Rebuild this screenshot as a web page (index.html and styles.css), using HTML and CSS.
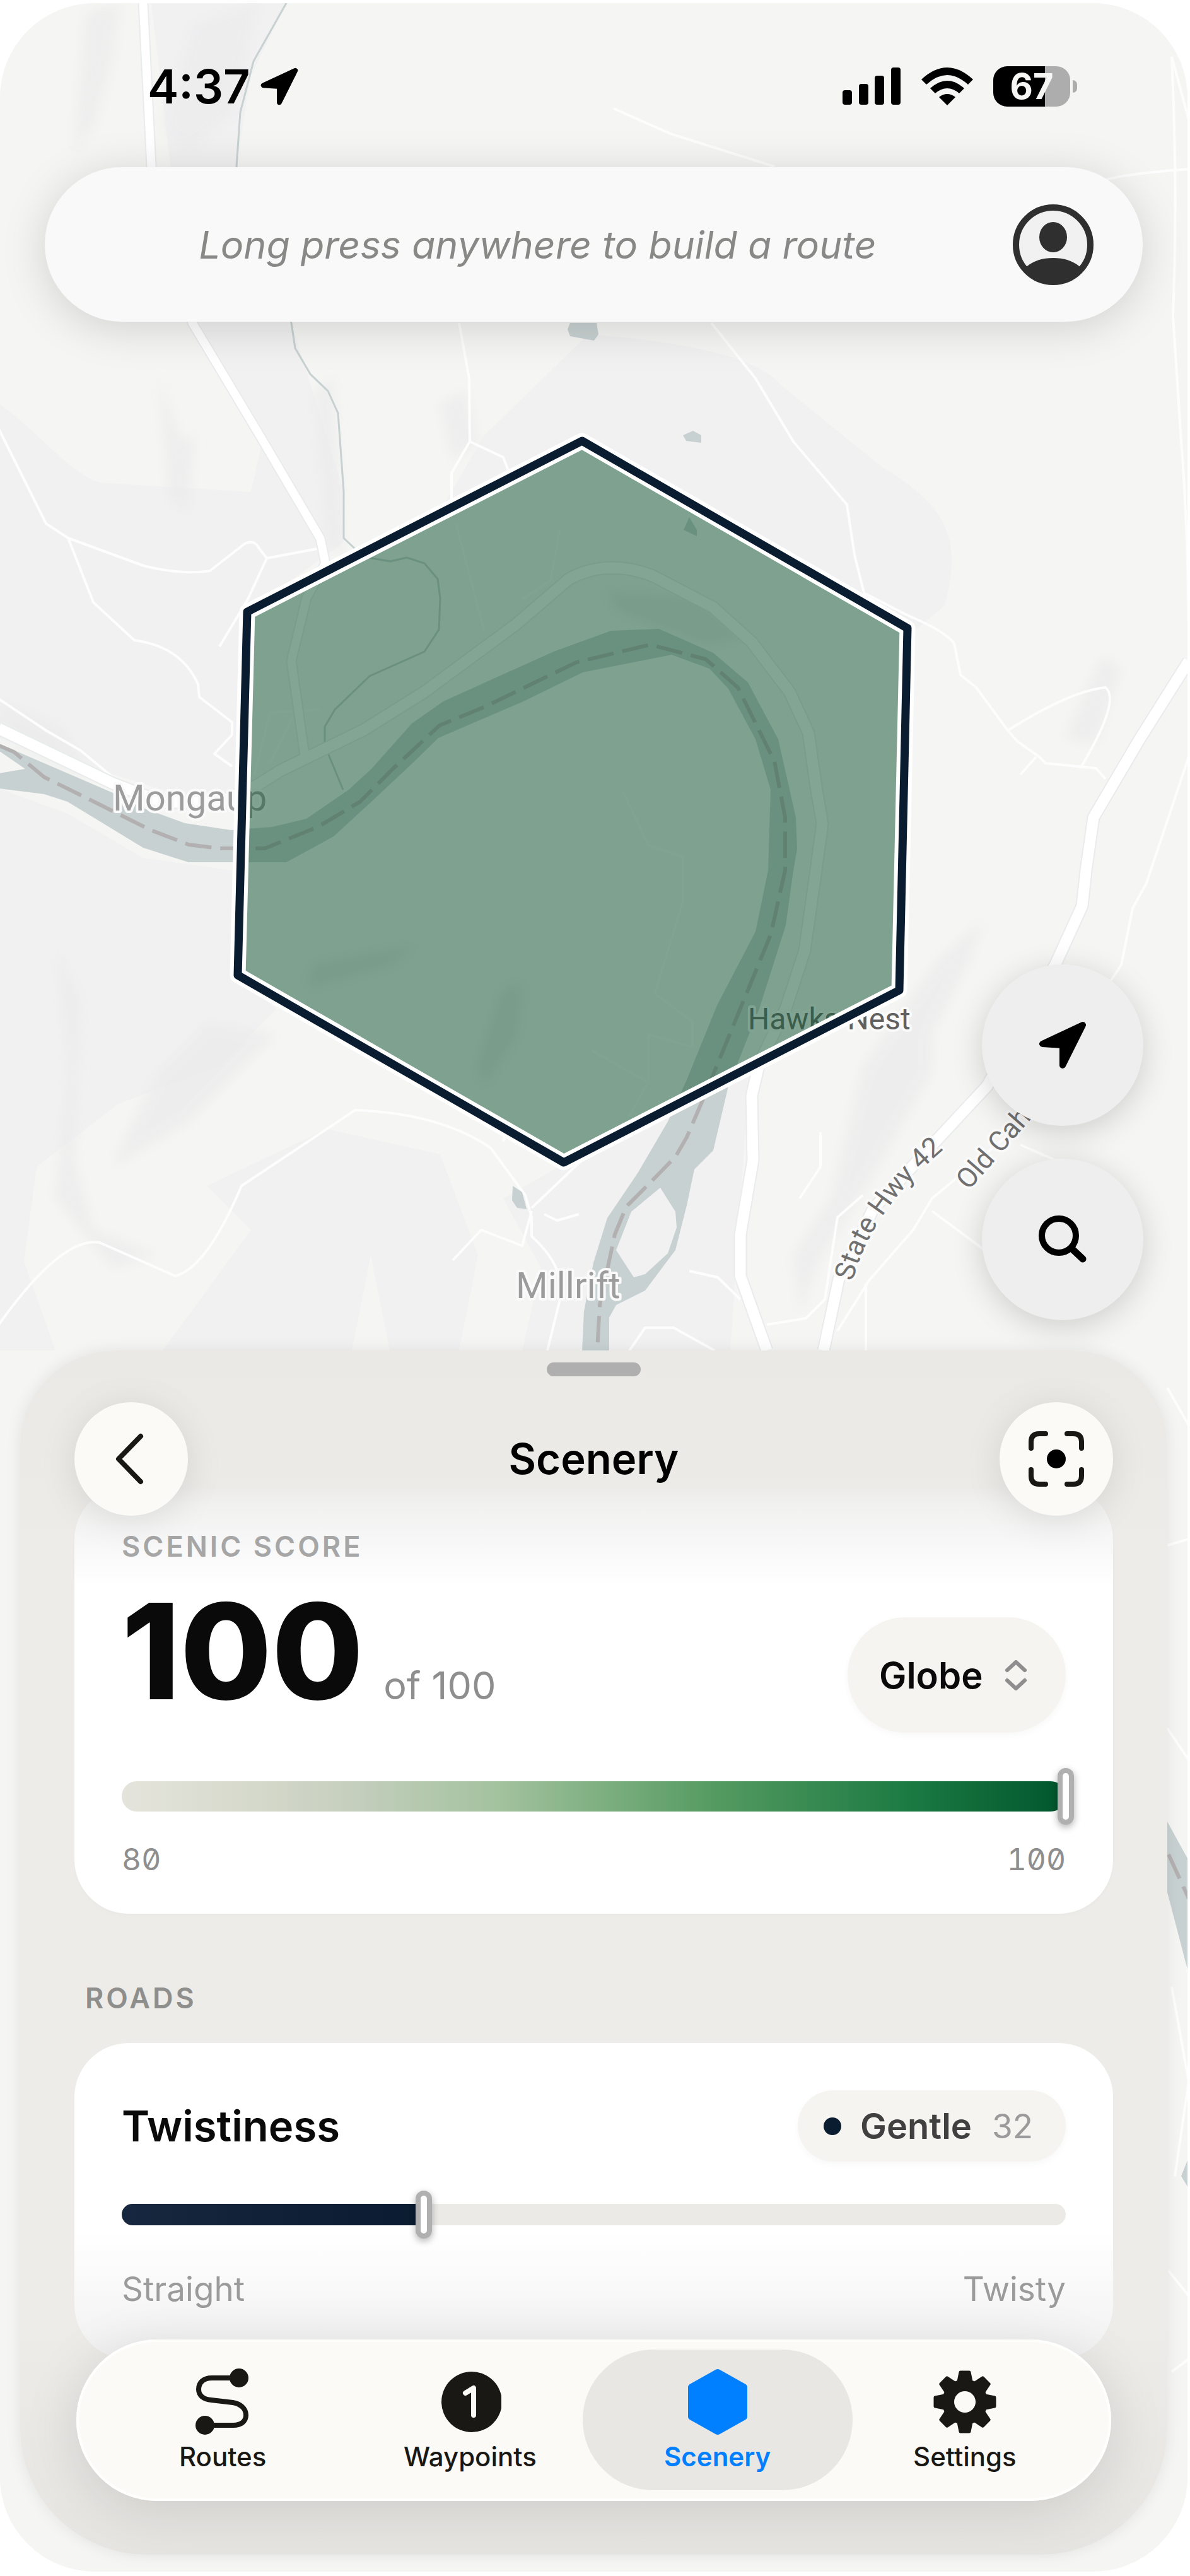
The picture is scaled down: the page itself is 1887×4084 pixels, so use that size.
FILE: index.html
```html
<!DOCTYPE html>
<html lang="en">
<head>
  <meta charset="UTF-8" />
  <meta name="viewport" content="width=device-width, initial-scale=1.0">
  <title>Scenery</title>
  <link rel="stylesheet" href="styles.css">
</head>
<body>
  <div class="screen">

    <!-- map canvas -->
    <svg class="map" viewBox="0 5 1887 4072" preserveAspectRatio="xMidYMin slice" role="img" aria-label="Map">
      <defs>
        <filter id="soft" x="-20%" y="-20%" width="140%" height="140%"><feGaussianBlur stdDeviation="9" /></filter>
      </defs>
      <rect y="5" width="1887" height="4072" fill="#f5f5f3" />

      <!-- woodland -->
      <g fill="#f1f1f2">
        <path d="M242 5H456L400 120L377 264L464 512L547 779V860L394 970L379 1290L0 1170V640C60 680 110 750 160 765L400 780L420 690L300 500Z" />
        <path d="M935 530C1060 540 1200 560 1240 610L1400 740C1500 800 1530 850 1500 960L1440 1010L920 700L700 810L770 690Z" />
        <path d="M0 1250L109 1290L229 1360L370 1380L379 1546L440 1600L350 1690L190 1750L60 1850L40 2000L90 2141H0Z" />
        <path d="M896 1845L1190 1700L1160 2141H830L860 2010L800 1900Z" />
        <path d="M330 1880L520 1790L700 1830L760 1990L730 2141H620L590 1990L560 2141H260L400 1950Z" />
      </g>
      <g fill="#ebebec" filter="url(#soft)" opacity=".7">
        <path d="M310 40L410 5L370 180L300 240L260 200Z" />
        <path d="M140 20L190 5L180 90L150 200L120 240Z" />
        <path d="M255 600L290 700L310 690L300 820L270 790Z" />
        <path d="M0 1110L100 1150L150 1240L60 1200L0 1165Z" />
        <path d="M90 1500L130 1580L120 1840L150 1950L250 1990L180 2010L90 1900L110 1690Z" />
        <path d="M330 1620L440 1640L300 1780L180 1850L250 1700Z" />
        <path d="M1370 1690L1490 1520L1560 1460L1540 1520L1480 1640L1480 1700L1400 1840L1300 2000L1270 2080L1260 1990L1320 1900Z" />
        <path d="M700 640L740 620L760 700L720 730Z" />
        <path d="M1750 1040L1780 1060L1740 1180L1690 1170Z" />
        <path d="M500 620L530 600L545 880L520 860Z" />
      </g>
      <g fill="#e9eaea" filter="url(#soft)">
        <path d="M960 940L1100 950L1180 1010L1120 1020L990 970Z" />
        <path d="M500 1530L660 1500L620 1530L490 1565Z" />
        <path d="M800 1570L830 1560L820 1640L770 1720L760 1690Z" />
      </g>

      <!-- minor roads -->
      <g fill="none" stroke="#fdfdfd" stroke-width="4" stroke-linejoin="round">
        <path d="M0 680L75 830L110 853L230 897Q290 912 335 905L390 862Q405 855 412 868L425 885L505 870M110 853L150 955L215 1015Q290 1025 316 1085L318 1105L370 1145V1165L342 1195L370 1215" />
        <path d="M425 885L395 950L350 1025M0 1108L75 1158L130 1190L200 1248M730 512L746 600L747 700L718 750V800M747 700L800 725L815 765" />
        <path d="M975 172L1065 212L1230 264M1130 512L1200 600L1260 700L1345 800L1357 880L1372 940L1440 975Q1500 1000 1515 1020L1525 1070L1550 1090L1600 1158L1615 1175L1650 1200L1660 1210L1740 1218L1755 1235" />
        <path d="M1600 1158Q1700 1095 1755 1090Q1780 1110 1715 1218M1645 1200L1620 1228M1755 285Q1790 275 1887 268M1860 90L1887 190M1860 90Q1870 300 1862 500L1875 700Q1885 820 1887 1000" />
        <path d="M725 830L770 1000M890 840L875 920L830 950M990 1255L1030 1340L1085 1358V1430L1040 1575L1100 1620V1660L1030 1640L1030 1714L1000 1770M940 1665L1028 1715" stroke-opacity=".6" />
        <path d="M1887 1200L1820 1400L1798 1440L1780 1530L1600 1800L1480 1900L1450 1950L1380 2030L1330 2110M1480 1920L1567 1985M1375 2035V2141M1620 1815L1700 1850" />
        <path d="M0 2100Q100 1960 160 1970L280 2023Q330 2010 385 1880L565 1760Q700 1765 780 1820L835 1895L845 1930V1960Q900 2010 890 2060L870 2141M800 1810L805 1790M945 1820L845 1915M845 1920L830 1975L765 1950L720 1998M865 1925L885 1935L920 1925" />
        <path d="M1000 2141L1025 2105L1070 2105L1135 2141M1095 2015L1140 2025L1176 2060M1218 2100L1280 2090L1310 2060L1330 1930L1370 1895M1303 1795V1850L1270 1900" />
        <path d="M405 1230L430 1130L510 1125M430 1210L470 1130" opacity=".6" />
        <path d="M1853 2200L1887 2260M1853 2450L1887 2440M1853 2740L1887 2790M1860 3150L1887 3300L1865 3450M1855 3600L1887 3640M1860 3760L1887 3740" />
      </g>

      <!-- creek and ponds -->
      <path d="M456 5L404 97L383 178L377 264L464 512L470 552L494 593L522 620L538 655L547 779V853L564 869L591 885L621 890L647 884L675 893L696 918L700 948L698 998L675 1033L588 1072L533 1125L517 1152V1182L546 1252" fill="none" stroke="#c8d1d1" stroke-width="3" />
      <g fill="#c8d1d1">
        <path d="M906 512H948L951 530L944 540L906 533L902 522Z" />
        <path d="M1085 690L1101 683L1114 690V702L1090 699Z" />
        <path d="M1095 820L1107 840V850L1086 840Z" />
        <path d="M815 1880L830 1890L837 1917L822 1915L814 1903Z" />
      </g>

      <!-- river -->
      <path fill="#c8d1d1" fill-rule="evenodd" d="M0 1179L181 1257L229 1281L295 1305L368 1316L434 1311L488 1298L555 1252L591 1219L655 1147L705 1112L880 1033L971 1000L1047 997L1133 1035L1188 1082L1236 1172L1264 1296L1266 1346L1260 1380L1248 1467L1206 1599L1157 1722L1133 1824L1103 1854L1091 1911L1073 1982L1025 2046L979 2069L968 2089V2141H925L928 2079L943 2002L965 1931L1013 1860L1061 1778L1091 1712L1139 1594L1200 1477L1220 1380L1224 1252L1200 1172L1157 1092L1127 1060L1067 1038L926 1066L832 1112L697 1170L657 1209L591 1271L531 1326L456 1367H301L229 1344L109 1271L72 1259L0 1250V1226L42 1219L0 1190Z
        M1049 1883L1073 1921L1075 1946L1061 1987L1025 2020L1007 2025L979 1982L1003 1921Z" />
      <path d="M1853 2888L1887 2950V3130L1853 3000ZM1875 3450L1887 3420V3470Z" fill="#c8d1d1" />
      <path d="M0 1182L24 1192L72 1232L157 1274L241 1316L301 1339L350 1345H422L506 1311L573 1271L627 1217L699 1150L772 1120L916 1050L1033 1022L1121 1045L1172 1090L1230 1207L1247 1296V1380L1224 1482L1157 1645L1115 1747L1091 1803L1073 1834L1031 1877L995 1913L977 1957L953 2069L949 2141M1855 2940L1887 3010" fill="none" stroke="#b3b0b1" stroke-width="6" stroke-dasharray="42 14" />

      <!-- main roads -->
      <g fill="none" stroke-linejoin="round">
        <g stroke="#e8ecec" stroke-width="21">
          <path d="M229 5L242 264L307 512L416 694L510 854L518 893L488 948L464 1048L485 1197" stroke-width="17" />
          <path d="M1887 1048L1809 1172L1736 1296L1724 1380L1718 1436L1676 1528L1567 1722L1501 1793L1387 1916L1332 2028L1308 2141" />
          <path d="M0 1155L181 1242L260 1272L350 1272L410 1245L446 1222L579 1157L675 1097L820 990L904 918Q965 885 1037 913L1133 963L1194 1018L1254 1097L1284 1162L1296 1247L1306 1306L1296 1380L1278 1507L1248 1599L1206 1686L1194 1737L1196 1839L1176 1957V2023L1218 2141" />
        </g>
        <g stroke="#ffffff" stroke-width="17">
          <path d="M229 5L242 264L307 512L416 694L510 854L518 893L488 948L464 1048L485 1197" stroke-width="13" />
          <path d="M1887 1048L1809 1172L1736 1296L1724 1380L1718 1436L1676 1528L1567 1722L1501 1793L1387 1916L1332 2028L1308 2141" />
          <path d="M0 1155L181 1242L260 1272L350 1272L410 1245L446 1222L579 1157L675 1097L820 990L904 918Q965 885 1037 913L1133 963L1194 1018L1254 1097L1284 1162L1296 1247L1306 1306L1296 1380L1278 1507L1248 1599L1206 1686L1194 1737L1196 1839L1176 1957V2023L1218 2141" />
        </g>
      </g>

      <!-- labels -->
      <path id="hwy-line" d="M1354 2032Q1385 1910 1520 1805" fill="none" />
      <g class="map-labels">
        <text class="place" x="181" y="1285">Mongaup</text>
        <text class="place" x="820" y="2058">Millrift</text>
        <text class="hamlet" x="1188" y="1632">Hawks Nest</text>
        <text class="road"><textPath href="#hwy-line">State Hwy 42</textPath></text>
        <text class="road" transform="translate(1538 1888) rotate(-49)">Old Cah</text>
      </g>

      <!-- selected cell -->
      <path d="M925 699L1441 996L1428 1570L896 1843L379 1546L394 970Z" fill="#1d5b3c" fill-opacity=".55" />
      <path d="M925 699L1441 996L1428 1570L896 1843L379 1546L394 970Z" fill="none" stroke="#ffffff" stroke-width="25" stroke-linejoin="round" />
      <path d="M925 699L1441 996L1428 1570L896 1843L379 1546L394 970Z" fill="none" stroke="#0a1c30" stroke-width="13" stroke-linejoin="round" />
    </svg>

    <header class="status-bar">
      <div class="status-left">
        <span class="clock">4:37</span>
        <svg class="icon-arrow" viewBox="0 0 76 76"><path d="M70 6L6 36L38 38V70Z" /></svg>
      </div>
      <div class="status-right">
        <svg class="icon-signal" viewBox="0 0 94 60">
          <rect x="1" y="36" width="15" height="23" rx="4" />
          <rect x="27" y="26" width="15" height="33" rx="4" />
          <rect x="52" y="13" width="15" height="46" rx="4" />
          <rect x="78" y="0" width="15" height="59" rx="4" />
        </svg>
        <svg class="icon-wifi" viewBox="0 0 82 60">
          <path d="M0 19Q41 -19 82 19L74 27Q41 -3 8 27Z" />
          <path d="M14 33Q41 9 68 33L60 41Q41 25 22 41Z" />
          <path d="M28 47Q41 37 54 47L41 60Z" />
        </svg>
        <div class="battery"><span class="battery-body">67</span><span class="battery-cap"></span></div>
      </div>
    </header>

    <div class="search-bar">
      <p class="hint">Long press anywhere to build a route</p>
      <button class="avatar" type="button" aria-label="Account">
        <svg viewBox="0 0 128 128">
          <circle cx="64" cy="64" r="59" fill="none" stroke="#2f2f2f" stroke-width="10" />
          <ellipse cx="64" cy="52" rx="22" ry="24" fill="#2f2f2f" />
          <path d="M23 99Q39 86 64 86T105 99A54 54 0 0 1 23 99Z" fill="#2f2f2f" stroke="#2f2f2f" stroke-width="2" />
        </svg>
      </button>
    </div>

    <div class="map-controls">
      <button class="round-btn" type="button" aria-label="My location">
        <svg class="icon-arrow" viewBox="0 0 76 76"><path d="M70 6L6 36L38 38V70Z" /></svg>
      </button>
      <button class="round-btn" type="button" aria-label="Search">
        <svg viewBox="0 0 76 76"><g fill="none" stroke="#000000" stroke-width="10" stroke-linecap="round"><circle cx="32" cy="32" r="27" /><path d="M52 52L70 69" stroke-width="11" /></g></svg>
      </button>
    </div>

    <main class="sheet">
      <div class="grabber"></div>
      <div class="sheet-header">
        <button class="sheet-btn" type="button" aria-label="Back">
          <svg class="icon-back" viewBox="0 0 90 90"><path d="M60 9L25 45L60 81" /></svg>
        </button>
        <h1>Scenery</h1>
        <button class="sheet-btn" type="button" aria-label="Fit to view">
          <svg class="icon-fit" viewBox="0 0 90 90">
            <path d="M5 28V18Q5 5 18 5H28M62 5H72Q85 5 85 18V28M85 62V72Q85 85 72 85H62M28 85H18Q5 85 5 72V62" />
            <circle cx="45" cy="45" r="15" />
          </svg>
        </button>
      </div>

      <section class="card score-card">
        <h2 class="section-label">SCENIC SCORE</h2>
        <div class="score-row">
          <div class="score"><strong>100</strong><span>of 100</span></div>
          <div class="picker">
            <select aria-label="Score scale">
              <option>Globe</option>
            </select>
            <svg viewBox="0 0 36 48"><path d="M4 16L18 3L32 16M4 32L18 45L32 32" /></svg>
          </div>
        </div>
        <div class="slider slider-score">
          <input type="range" min="80" max="100" value="100" aria-label="Scenic score">
        </div>
        <div class="ends ends-mono"><span>80</span><span>100</span></div>
      </section>

      <h2 class="section-label roads-label">ROADS</h2>
      <section class="card roads-card">
        <div class="metric-row">
          <label class="metric" for="twistiness">Twistiness</label>
          <div class="chip"><i></i><b>Gentle</b><span>32</span></div>
        </div>
        <div class="slider slider-twist">
          <div class="fill" style="width: 32%"></div>
          <input id="twistiness" type="range" min="0" max="100" value="32">
        </div>
        <div class="ends"><span>Straight</span><span>Twisty</span></div>
      </section>

      <nav class="tab-bar">
        <a class="tab" href="#routes">
          <svg viewBox="0 0 100 106">
            <path d="M76 15H33C20 15 12 22 12 33C12 43 20 49 32 50L66 54C78 56 87 63 87 74C87 84 79 90 67 90H22" fill="none" stroke="#191814" stroke-width="8" />
            <circle cx="76" cy="15" r="15" /><circle cx="22" cy="90" r="15" />
          </svg>
          Routes
        </a>
        <a class="tab" href="#waypoints">
          <svg viewBox="0 0 100 106">
            <circle cx="53" cy="53" r="48" />
            <path d="M43 39L56 31V74" fill="none" stroke="#fbfaf7" stroke-width="8" stroke-linecap="round" stroke-linejoin="round" />
          </svg>
          Waypoints
        </a>
        <a class="tab tab-active" href="#scenery">
          <svg viewBox="0 0 100 106"><path d="M50 7L91 30V76L50 99L9 76V30Z" stroke="#0080ff" stroke-width="12" stroke-linejoin="round" /></svg>
          Scenery
        </a>
        <a class="tab" href="#settings">
          <svg viewBox="0 0 100 106">
            <g stroke="#191814" stroke-width="5" stroke-linejoin="round">
              <path d="M43 6H57L61 26V80L57 100H43L39 80V26Z" />
              <path d="M43 6H57L61 26V80L57 100H43L39 80V26Z" transform="rotate(45 50 53)" />
              <path d="M43 6H57L61 26V80L57 100H43L39 80V26Z" transform="rotate(90 50 53)" />
              <path d="M43 6H57L61 26V80L57 100H43L39 80V26Z" transform="rotate(135 50 53)" />
            </g>
            <circle cx="50" cy="53" r="36" />
            <circle cx="50" cy="53" r="17" fill="#fbfaf7" />
          </svg>
          Settings
        </a>
      </nav>
    </main>
  </div>
</body>
</html>
```

FILE: styles.css
```css
* {
  box-sizing: border-box;
}
body {
  margin: 0;
  background: #ffffff;
  color: #0a0a0a;
  font-family: Inter, "Liberation Sans", sans-serif;
}
button, select {
  font-family: inherit;
  border: none;
  padding: 0;
}
h1, h2, p {
  margin: 0;
}

.screen {
  position: relative;
  display: flex;
  flex-direction: column;
  min-height: calc(100vh - 12px);
  margin: 5px 4px 7px 0;
  border-radius: 150px;
  overflow: hidden;
  background: #f5f5f3;
}
.map {
  position: absolute;
  inset: 0;
  width: 100%;
  height: 100%;
}
.map-labels {
  font-family: Roboto, sans-serif;
  paint-order: stroke;
  stroke: #fafafa;
  stroke-width: 8px;
  stroke-linejoin: round;
}
.place {
  font-size: 58px;
  fill: #9c9c9c;
}
.hamlet {
  font-size: 48px;
  fill: #606060;
}
.road {
  font-size: 44px;
  fill: #707070;
}

/* status bar */
.status-bar {
  position: relative;
  display: flex;
  justify-content: space-between;
  align-items: center;
  height: 92px;
  margin: 86px 175px 0 234px;
}
.status-left, .status-right, .battery {
  display: flex;
  align-items: center;
}
.status-left {
  gap: 16px;
}
.clock {
  font-size: 74px;
  font-weight: 600;
  line-height: 92px;
  color: #000000;
}
.icon-arrow {
  width: 60px;
  height: 60px;
  stroke: #000000;
  stroke-width: 10px;
  stroke-linejoin: round;
}
.status-right {
  gap: 32px;
}
.icon-signal {
  width: 94px;
  height: 60px;
}
.icon-wifi {
  width: 82px;
  height: 60px;
}
.battery {
  gap: 4px;
}
.battery-body {
  width: 122px;
  height: 64px;
  border-radius: 22px;
  background: linear-gradient(90deg, #000000 67%, #adadad 67%);
  color: #f6f6f4;
  font-size: 56px;
  font-weight: 700;
  line-height: 64px;
  text-align: center;
}
.battery-cap {
  width: 7px;
  height: 20px;
  border-radius: 0 8px 8px 0;
  background: #adadad;
}

.search-bar {
  position: relative;
  display: flex;
  align-items: center;
  height: 245px;
  margin: 82px 71px 0;
  padding: 0 78px 0 28px;
  border-radius: 123px;
  background: #f9f9f9;
  box-shadow: 0 10px 70px rgba(0, 0, 0, 0.15);
}
.hint {
  flex: 1;
  font-size: 61px;
  font-style: italic;
  line-height: 76px;
  text-align: center;
  color: #888886;
}
.avatar {
  width: 128px;
  height: 128px;
  border-radius: 50%;
  background: #f1f1f1;
}
.avatar svg {
  display: block;
}

/* floating map buttons */
.map-controls {
  position: relative;
  display: flex;
  flex-direction: column;
  align-items: flex-end;
  gap: 52px;
  margin: auto 70px 48px;
}
.round-btn {
  display: flex;
  align-items: center;
  justify-content: center;
  width: 256px;
  height: 256px;
  border-radius: 50%;
  background: #eeeeee;
  box-shadow: 0 10px 50px rgba(0, 0, 0, 0.16);
}
.round-btn svg {
  width: 76px;
  height: 76px;
}

/* bottom sheet */
.sheet {
  position: relative;
  margin: 0 32px 27px;
  padding: 19px 86px 310px;
  border-radius: 150px 150px 200px 200px;
  background: linear-gradient(#eae9e6, #edece8 20%, #edece8 80%, #e6e5e2);
  box-shadow: 0 0 24px rgba(0, 0, 0, 0.08);
}
.grabber {
  width: 149px;
  height: 22px;
  margin: 0 auto 41px;
  border-radius: 11px;
  background: #b0afaf;
}
.sheet-header {
  position: relative;
  z-index: 1;
  display: flex;
  justify-content: space-between;
  align-items: center;
}
.sheet-header h1 {
  font-size: 67px;
  font-weight: 600;
  line-height: 80px;
  color: #000000;
}
.sheet-btn {
  display: flex;
  align-items: center;
  justify-content: center;
  width: 180px;
  height: 180px;
  border-radius: 50%;
  background: #fbfaf7;
  box-shadow: 0 8px 60px rgba(0, 0, 0, 0.1);
}
.sheet-btn svg {
  width: 90px;
  height: 90px;
}
.icon-back, .icon-fit path {
  fill: none;
  stroke: #191814;
  stroke-width: 8px;
  stroke-linecap: round;
  stroke-linejoin: round;
}

.card {
  padding: 0 75px;
  border-radius: 86px;
}
.score-card {
  margin-top: -48px;
  padding-top: 69px;
  padding-bottom: 58px;
  background: linear-gradient(#ebeae7, #f1f1f0 30px, #f6f6f6 80px, #ffffff 160px);
  box-shadow: 0 3px 6px rgba(0, 0, 0, 0.02);
}
.section-label {
  font-size: 45px;
  font-weight: 600;
  line-height: 56px;
  letter-spacing: 4px;
  color: #a6a6a6;
}
.score-row {
  display: flex;
  justify-content: space-between;
  align-items: flex-start;
  margin-top: 84px;
}
.score {
  display: flex;
  align-items: baseline;
  gap: 32px;
}
.score strong {
  font-size: 210px;
  font-weight: 800;
  line-height: 108px;
}
.score span {
  font-size: 61px;
  color: #8e8e8e;
}
.picker {
  position: relative;
}
.picker select {
  appearance: none;
  width: 346px;
  height: 183px;
  padding: 0 50px;
  border-radius: 92px;
  background: #f5f4f0;
  box-shadow: 0 4px 12px rgba(0, 0, 0, 0.03);
  color: #0a0a0a;
  font-size: 58px;
  font-weight: 600;
}
.picker svg {
  position: absolute;
  top: 68px;
  right: 61px;
  width: 36px;
  height: 48px;
  fill: none;
  stroke: #8e8e8e;
  stroke-width: 6px;
  stroke-linecap: round;
  stroke-linejoin: round;
  pointer-events: none;
}

/* the thumb centre travels from one end of the track to the other */
.slider {
  display: flex;
  align-items: center;
  position: relative;
  background: #ebeae6;
}
.slider-score {
  height: 48px;
  margin-top: 77px;
  border-radius: 24px;
  background: linear-gradient(90deg, #e5e4dc, #d5d9cb 14%, #c8d0c0 23%, #a3c29e 40%, #549a60 63%, #1c7b43 83%, #00562d);
}
.slider-twist {
  height: 34px;
  margin-top: 67px;
  border-radius: 17px;
}
.slider .fill {
  height: 34px;
  border-radius: 17px 0 0 17px;
  background: linear-gradient(90deg, #17273f, #0a1c30);
}
.slider input {
  position: absolute;
  left: -13px;
  width: calc(100% + 26px);
  margin: 0;
  appearance: none;
  background: none;
}
.slider input::-webkit-slider-thumb {
  appearance: none;
  width: 26px;
  height: 76px;
  border: 8px solid #b0b0b0;
  border-radius: 13px;
  background: #ffffff;
  box-shadow: 0 4px 12px rgba(0, 0, 0, 0.3);
}
.slider-score input::-webkit-slider-thumb {
  height: 90px;
}
.ends {
  display: flex;
  justify-content: space-between;
  margin-top: 69px;
  font-size: 53px;
  line-height: 64px;
  color: #9b9b9b;
}
.ends-mono {
  margin-top: 48px;
  font-size: 48px;
  line-height: 56px;
  font-feature-settings: "tnum", "zero";
  color: #8e8e8e;
}

.roads-label {
  margin: 106px 17px 43px;
  color: #8e8e8c;
}
.roads-card {
  padding-top: 75px;
  padding-bottom: 79px;
  background: linear-gradient(#ffffff 300px, #f1f1f1);
}
.metric-row {
  display: flex;
  justify-content: space-between;
  align-items: center;
}
.metric {
  font-size: 67px;
  font-weight: 600;
  line-height: 80px;
}
.chip {
  display: flex;
  align-items: center;
  height: 113px;
  padding: 0 52px 0 41px;
  border-radius: 57px;
  background: #f5f4f1;
  box-shadow: 0 4px 12px rgba(0, 0, 0, 0.03);
  font-size: 56px;
  line-height: 66px;
}
.chip i {
  width: 28px;
  height: 28px;
  border-radius: 50%;
  background: #0a1c30;
}
.chip b {
  margin: 0 32px 0 30px;
  font-weight: 600;
  color: #404040;
}
.chip span {
  font-size: 53px;
  color: #9b9b9b;
}

/* tabs */
.tab-bar {
  position: absolute;
  left: 89px;
  right: 89px;
  bottom: 85px;
  display: flex;
  padding: 16px 36px 17px;
  border-radius: 128px;
  background: #fbfaf7;
  box-shadow: inset 0 0 0 4px #fefefc, 0 16px 90px rgba(0, 0, 0, 0.12);
}
.tab {
  flex: 1;
  display: flex;
  flex-direction: column;
  align-items: center;
  gap: 9px;
  height: 223px;
  margin: 0 -18px;
  padding: 30px 18px 0;
  border-radius: 112px;
  color: #191814;
  fill: #191814;
  font-size: 42px;
  font-weight: 500;
  line-height: 50px;
  text-decoration: none;
}
.tab svg {
  width: 100px;
  height: 106px;
}
.tab-active {
  background: #e8e7e4;
  color: #0080ff;
  fill: #0080ff;
  font-weight: 600;
}
```
